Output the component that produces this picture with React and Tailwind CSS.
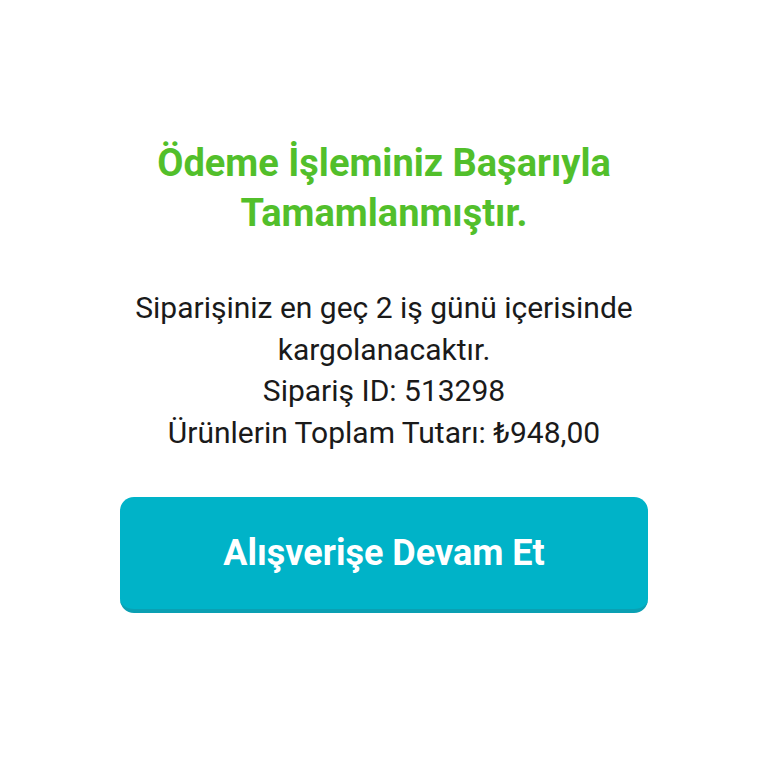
export default function App() {
  return (
    <div className="min-h-screen bg-white flex justify-center" style={{ fontFamily: "Roboto, 'Liberation Sans', sans-serif" }}>
      <div className="w-[528px] pt-[138px] flex flex-col items-center text-center">
        <h1 className="text-[38px] leading-[50px] font-bold text-[#52bf2b]">
          Ödeme İşleminiz Başarıyla Tamamlanmıştır.
        </h1>
        <div className="mt-[49px] text-[30px] leading-[41.7px] text-[#1a1a1a]">
          <p>Siparişiniz en geç 2 iş günü içerisinde kargolanacaktır.</p>
          <p>Sipariş ID: 513298</p>
          <p>Ürünlerin Toplam Tutarı: ₺948,00</p>
        </div>
        <button
          type="button"
          className="mt-[43px] w-full h-[116px] rounded-[14px] bg-[#00b3c8] border-b-4 border-[#0aa0b3] text-white text-[36px] font-bold"
        >
          Alışverişe Devam Et
        </button>
      </div>
    </div>
  );
}
